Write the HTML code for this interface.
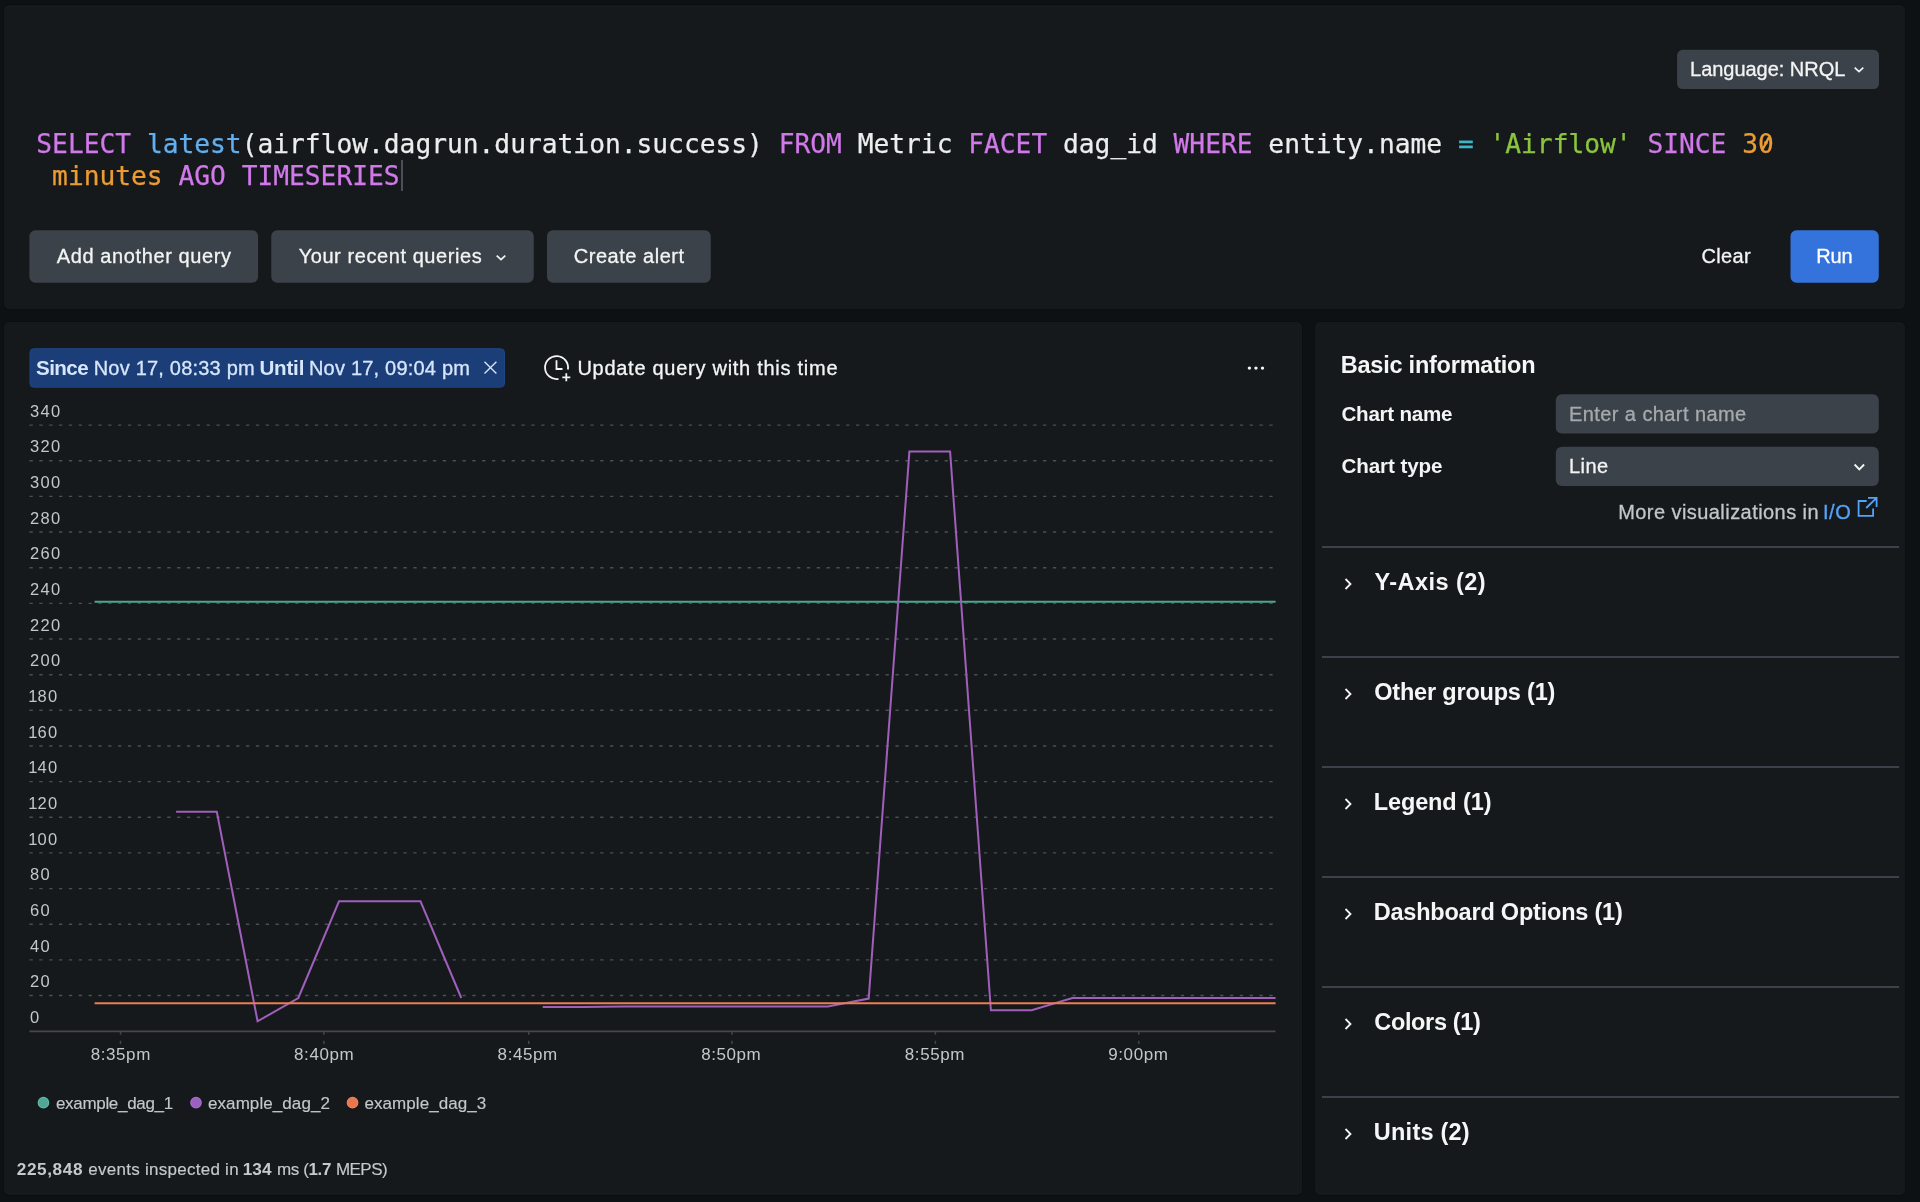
<!DOCTYPE html>
<html lang="en">
<head>
<meta charset="utf-8">
<title>Query builder</title>
<style>
*{box-sizing:border-box;margin:0;padding:0}
html,body{width:1920px;height:1202px;overflow:hidden;background:#0e1113}
body{position:relative;font-family:"Liberation Sans",sans-serif;color:#f3f4f4}
#root{position:absolute;left:0;top:0;width:1920px;height:1202px;will-change:transform}
.abs{position:absolute;white-space:nowrap}
.panel{position:absolute;background:#15191c;border-radius:5px;box-shadow:0 0 0 1px #0c0f11}
.btn{position:absolute;background:#3c4249;border-radius:6px}
.t{position:absolute;white-space:nowrap;line-height:1;-webkit-text-stroke:0.3px}
.t b{-webkit-text-stroke:0}
.code{position:absolute;white-space:pre;font-family:"DejaVu Sans Mono","Liberation Mono",monospace;font-size:26.245px;line-height:31.9px;color:#eceded;-webkit-text-stroke:0.25px}
.kw{color:#d178ea}.fn{color:#61afef}.op{color:#3fb6c4}.str{color:#8bc53f}.num{color:#eb9c33}
.div{position:absolute;left:1321.5px;width:577.5px;height:2px;background:#3f404b}
.dot{position:absolute;width:11.8px;height:11.8px;border-radius:50%;border:1.3px solid}
</style>
</head>
<body>
<div id="root">

<!-- panels and filled shapes -->
<div class="panel" style="left:4px;top:5px;width:1901.2px;height:303.8px"></div>
<div class="panel" style="left:4px;top:321.8px;width:1297.7px;height:873.1px"></div>
<div class="panel" style="left:1315px;top:321.8px;width:590.2px;height:873.1px"></div>
<svg class="abs" style="left:0;top:0" width="1920" height="500" viewBox="0 0 1920 500">
<g fill="#3c4249">
<rect x="1677.1" y="49.8" width="201.9" height="39.2" rx="5.5"/>
<rect x="29.4" y="230.2" width="228.7" height="52.5" rx="6"/>
<rect x="271.25" y="230.2" width="262.5" height="52.5" rx="6"/>
<rect x="547" y="230.2" width="163.75" height="52.5" rx="6"/>
<rect x="1555.8" y="394.3" width="323" height="39.2" rx="6"/>
<rect x="1555.8" y="446.8" width="323" height="39.2" rx="6"/>
</g>
<rect x="1790.5" y="230.2" width="88.25" height="52.5" rx="6" fill="#3573dc"/>
<rect x="30" y="348.7" width="474.5" height="38.5" rx="4" fill="#1c3e78" stroke="#1e4686" stroke-width="1"/>
</svg>

<!-- top query panel -->
<svg class="abs" style="left:1852px;top:63px" width="14" height="14" viewBox="0 0 14 14"><path d="M2.7 4.6 L7 8.7 L11.3 4.6" fill="none" stroke="#f3f4f4" stroke-width="1.7"/></svg>
<div class="code" id="code" style="left:36.3px;top:128.7px"><span class="kw">SELECT</span> <span class="fn">latest</span>(airflow.dagrun.duration.success) <span class="kw">FROM</span> Metric <span class="kw">FACET</span> dag_id <span class="kw">WHERE</span> entity.name <span class="op">=</span> <span class="str">'Airflow'</span> <span class="kw">SINCE</span> <span class="num">30</span>
 <span class="num">minutes</span> <span class="kw">AGO</span> <span class="kw">TIMESERIES</span></div>
<svg class="abs" style="left:1756px;top:130px" width="20" height="28" viewBox="0 0 20 28"><line x1="6.7" y1="19.2" x2="12.9" y2="7.4" stroke="#eb9c33" stroke-width="2.3"/></svg>
<div class="abs" style="left:401px;top:160px;width:2px;height:31px;background:#4a5058"></div>
<svg class="abs" style="left:494.3px;top:250.5px" width="14" height="14" viewBox="0 0 14 14"><path d="M2.7 4.6 L7 8.7 L11.3 4.6" fill="none" stroke="#f3f4f4" stroke-width="1.7"/></svg>

<!-- chart panel -->
<svg class="abs" style="left:483px;top:360.4px" width="15" height="15" viewBox="0 0 15 15"><path d="M1.5 1.7 L13.4 13.5 M13.4 1.7 L1.5 13.5" fill="none" stroke="#d6e6fb" stroke-width="1.35"/></svg>
<svg class="abs" style="left:540px;top:351px" width="34" height="34" viewBox="0 0 34 34"><g fill="none" stroke="#f3f4f4" stroke-width="1.8"><path d="M27.9 18.5 A11.5 11.5 0 1 0 18.5 27.9"/><path d="M16.5 9.2 V18 H22.5"/><path d="M26.3 22.3 V30.3 M22.3 26.3 H30.3"/></g></svg>
<svg class="abs" style="left:1240px;top:360px" width="32" height="16" viewBox="0 0 32 16"><g fill="#f3f4f4"><circle cx="9.4" cy="8.1" r="1.7"/><circle cx="15.95" cy="8.1" r="1.7"/><circle cx="22.5" cy="8.1" r="1.7"/></g></svg>
<svg class="abs" style="left:0;top:0" width="1302" height="1202" viewBox="0 0 1302 1202">
<g stroke="#4a4f57" stroke-width="1.4" stroke-dasharray="3.3 6.54">
<line x1="29.5" x2="1273.3" y1="995.5" y2="995.5"/>
<line x1="29.5" x2="1273.3" y1="959.9" y2="959.9"/>
<line x1="29.5" x2="1273.3" y1="924.2" y2="924.2"/>
<line x1="29.5" x2="1273.3" y1="888.6" y2="888.6"/>
<line x1="29.5" x2="1273.3" y1="852.9" y2="852.9"/>
<line x1="29.5" x2="1273.3" y1="817.3" y2="817.3"/>
<line x1="29.5" x2="1273.3" y1="781.6" y2="781.6"/>
<line x1="29.5" x2="1273.3" y1="746.0" y2="746.0"/>
<line x1="29.5" x2="1273.3" y1="710.3" y2="710.3"/>
<line x1="29.5" x2="1273.3" y1="674.7" y2="674.7"/>
<line x1="29.5" x2="1273.3" y1="639.0" y2="639.0"/>
<line x1="29.5" x2="1273.3" y1="603.4" y2="603.4"/>
<line x1="29.5" x2="1273.3" y1="567.7" y2="567.7"/>
<line x1="29.5" x2="1273.3" y1="532.0" y2="532.0"/>
<line x1="29.5" x2="1273.3" y1="496.4" y2="496.4"/>
<line x1="29.5" x2="1273.3" y1="460.7" y2="460.7"/>
<line x1="29.5" x2="1273.3" y1="425.1" y2="425.1"/>
</g>
<line x1="29.5" x2="1275.5" y1="1031.4" y2="1031.4" stroke="#48464f" stroke-width="1.6"/>
<g stroke="#45434f" stroke-width="1.5" stroke-dasharray="3.4 5.9">
<line x1="120.50" x2="120.50" y1="1031.4" y2="1044.4"/>
<line x1="323.85" x2="323.85" y1="1031.4" y2="1044.4"/>
<line x1="528.75" x2="528.75" y1="1031.4" y2="1044.4"/>
<line x1="731.90" x2="731.90" y1="1031.4" y2="1044.4"/>
<line x1="935.40" x2="935.40" y1="1031.4" y2="1044.4"/>
<line x1="1138.75" x2="1138.75" y1="1031.4" y2="1044.4"/>
</g>
<g fill="none" stroke-width="2" stroke-linejoin="miter">
<polyline points="94.6,601.7 1275.6,601.7" stroke="#4ca694"/>
<polyline points="176.1,811.8 216.8,811.8 257.6,1021.3 298.3,998.0 339.0,901.3 420.5,901.3 461.3,998.0" stroke="#a05fbb"/>
<polyline points="542.7,1007.0 583.5,1007.0 624.2,1006.5 827.9,1006.5 868.7,998.6 909.4,451.6 950.1,451.6 990.9,1010.3 1031.6,1010.3 1072.4,998.0 1275.6,998.0" stroke="#a05fbb"/>
<polyline points="94.6,1003.3 1275.6,1003.3" stroke="#ec7e52"/>
</g>
</svg>

<svg class="abs" style="left:30px;top:1090px" width="340" height="26" viewBox="0 0 340 26"><g stroke-width="1.2"><circle cx="13.45" cy="12.65" r="5.25" fill="#52a794" stroke="#5bb9a5"/><circle cx="166" cy="12.6" r="5.25" fill="#9b61be" stroke="#aa69d0"/><circle cx="322.55" cy="12.65" r="5.25" fill="#e8764e" stroke="#fa8055"/></g></svg>

<!-- config panel -->
<svg class="abs" style="left:1852px;top:459.5px" width="14" height="14" viewBox="0 0 14 14"><path d="M2.6 4.5 L7.35 9.3 L12.1 4.5" fill="none" stroke="#f3f4f4" stroke-width="1.9"/></svg>
<svg class="abs" style="left:1856px;top:495px" width="24" height="24" viewBox="0 0 24 24"><g fill="none" stroke="#55a3f8" stroke-width="1.8"><path d="M10.7 6 H2.6 V20.85 H17.1 V13.4"/><path d="M12 2.9 H20.6 V12 M20.6 2.9 L10.2 13"/></g></svg>
<div class="div" style="top:546.0px"></div>
<svg class="abs" style="left:1341px;top:576.0px" width="14" height="16" viewBox="0 0 14 16"><path d="M4.5 3 L9.5 8 L4.5 13" fill="none" stroke="#f3f4f4" stroke-width="1.8"/></svg>
<div class="div" style="top:655.9px"></div>
<svg class="abs" style="left:1341px;top:685.9px" width="14" height="16" viewBox="0 0 14 16"><path d="M4.5 3 L9.5 8 L4.5 13" fill="none" stroke="#f3f4f4" stroke-width="1.8"/></svg>
<div class="div" style="top:765.9px"></div>
<svg class="abs" style="left:1341px;top:795.9px" width="14" height="16" viewBox="0 0 14 16"><path d="M4.5 3 L9.5 8 L4.5 13" fill="none" stroke="#f3f4f4" stroke-width="1.8"/></svg>
<div class="div" style="top:875.8px"></div>
<svg class="abs" style="left:1341px;top:905.8px" width="14" height="16" viewBox="0 0 14 16"><path d="M4.5 3 L9.5 8 L4.5 13" fill="none" stroke="#f3f4f4" stroke-width="1.8"/></svg>
<div class="div" style="top:985.7px"></div>
<svg class="abs" style="left:1341px;top:1015.7px" width="14" height="16" viewBox="0 0 14 16"><path d="M4.5 3 L9.5 8 L4.5 13" fill="none" stroke="#f3f4f4" stroke-width="1.8"/></svg>
<div class="div" style="top:1095.7px"></div>
<svg class="abs" style="left:1341px;top:1125.7px" width="14" height="16" viewBox="0 0 14 16"><path d="M4.5 3 L9.5 8 L4.5 13" fill="none" stroke="#f3f4f4" stroke-width="1.8"/></svg>

<!-- text -->
<div class="t" id="t-lang" style="left:1690.08px;top:59px;font-size:20px;color:#f3f4f4;letter-spacing:-0.036px">Language: NRQL</div>
<div class="t" id="t-add" style="left:56.79px;top:246px;font-size:20px;color:#f3f4f4;letter-spacing:0.605px">Add another query</div>
<div class="t" id="t-recent" style="left:298.65px;top:246px;font-size:20px;color:#f3f4f4;letter-spacing:0.576px">Your recent queries</div>
<div class="t" id="t-alert" style="left:573.77px;top:246px;font-size:20px;color:#f3f4f4;letter-spacing:0.527px">Create alert</div>
<div class="t" id="t-clear" style="left:1701.42px;top:246px;font-size:20px;color:#f3f4f4;letter-spacing:0.347px">Clear</div>
<div class="t" id="t-run" style="left:1816.24px;top:246px;font-size:20px;color:#ffffff;letter-spacing:-0.174px">Run</div>
<div class="t" id="c-since" style="left:36.05px;top:358px;font-size:20.6px;color:#d6e6fb;letter-spacing:-0.595px;font-weight:bold;-webkit-text-stroke:0">Since</div>
<div class="t" id="c-d1" style="left:93.70px;top:358px;font-size:20px;color:#d6e6fb;letter-spacing:0.210px">Nov 17, 08:33 pm</div>
<div class="t" id="c-until" style="left:259.39px;top:358px;font-size:20.6px;color:#d6e6fb;letter-spacing:-0.189px;font-weight:bold;-webkit-text-stroke:0">Until</div>
<div class="t" id="c-d2" style="left:308.93px;top:358px;font-size:20px;color:#d6e6fb;letter-spacing:0.210px">Nov 17, 09:04 pm</div>
<div class="t" id="t-update" style="left:577.39px;top:358px;font-size:20px;color:#f3f4f4;letter-spacing:0.728px">Update query with this time</div>
<div class="t" id="lg1" style="left:55.97px;top:1095px;font-size:17px;color:#c4c7c9;letter-spacing:-0.318px;-webkit-text-stroke:0.15px">example_dag_1</div>
<div class="t" id="lg2" style="left:208.00px;top:1095px;font-size:17px;color:#c4c7c9;letter-spacing:0.076px;-webkit-text-stroke:0.15px">example_dag_2</div>
<div class="t" id="lg3" style="left:364.53px;top:1095px;font-size:17px;color:#c4c7c9;letter-spacing:0.057px;-webkit-text-stroke:0.15px">example_dag_3</div>
<div class="t" id="f1" style="left:16.72px;top:1161px;font-size:17.2px;color:#c6c9cb;letter-spacing:0.613px;font-weight:bold;-webkit-text-stroke:0">225,848</div>
<div class="t" id="f2" style="left:88.30px;top:1161px;font-size:17px;color:#c6c9cb;letter-spacing:0.266px;-webkit-text-stroke:0.15px">events inspected in</div>
<div class="t" id="f3" style="left:242.67px;top:1161px;font-size:17.2px;color:#c6c9cb;letter-spacing:0.093px;font-weight:bold;-webkit-text-stroke:0">134</div>
<div class="t" id="f4" style="left:276.94px;top:1161px;font-size:17px;color:#c6c9cb;letter-spacing:-0.364px;-webkit-text-stroke:0.15px">ms (<b>1.7</b></div>
<div class="t" id="f6" style="left:335.88px;top:1161px;font-size:17px;color:#c6c9cb;letter-spacing:-0.528px;-webkit-text-stroke:0.15px">MEPS)</div>
<div class="t" id="h-basic" style="left:1340.72px;top:354px;font-size:23.5px;color:#f5f6f6;letter-spacing:-0.227px;font-weight:bold;-webkit-text-stroke:0">Basic information</div>
<div class="t" id="t-cname" style="left:1341.42px;top:404px;font-size:20.6px;color:#f3f4f4;letter-spacing:-0.239px;font-weight:bold;-webkit-text-stroke:0">Chart name</div>
<div class="t" id="t-enter" style="left:1569.01px;top:404px;font-size:20px;color:#a7aaad;letter-spacing:0.417px">Enter a chart name</div>
<div class="t" id="t-ctype" style="left:1341.42px;top:456px;font-size:20.6px;color:#f3f4f4;letter-spacing:-0.080px;font-weight:bold;-webkit-text-stroke:0">Chart type</div>
<div class="t" id="t-line" style="left:1568.97px;top:456px;font-size:20px;color:#f3f4f4;letter-spacing:0.469px">Line</div>
<div class="t" id="t-more" style="left:1618.15px;top:502px;font-size:20px;color:#c3c6c8;letter-spacing:0.441px">More visualizations in</div>
<div class="t" id="t-io" style="left:1822.96px;top:502px;font-size:20px;color:#55a3f8;letter-spacing:0.543px">I/O</div>
<div class="t" id="h-s0" style="left:1374.47px;top:571px;font-size:23.5px;color:#f5f6f6;letter-spacing:0.452px;font-weight:bold;-webkit-text-stroke:0">Y-Axis (2)</div>
<div class="t" id="h-s1" style="left:1374.26px;top:681px;font-size:23.5px;color:#f5f6f6;letter-spacing:-0.195px;font-weight:bold;-webkit-text-stroke:0">Other groups (1)</div>
<div class="t" id="h-s2" style="left:1373.70px;top:791px;font-size:23.5px;color:#f5f6f6;letter-spacing:-0.110px;font-weight:bold;-webkit-text-stroke:0">Legend (1)</div>
<div class="t" id="h-s3" style="left:1373.70px;top:901px;font-size:23.5px;color:#f5f6f6;letter-spacing:-0.210px;font-weight:bold;-webkit-text-stroke:0">Dashboard Options (1)</div>
<div class="t" id="h-s4" style="left:1374.26px;top:1011px;font-size:23.5px;color:#f5f6f6;letter-spacing:-0.342px;font-weight:bold;-webkit-text-stroke:0">Colors (1)</div>
<div class="t" id="h-s5" style="left:1373.84px;top:1121px;font-size:23.5px;color:#f5f6f6;letter-spacing:0.234px;font-weight:bold;-webkit-text-stroke:0">Units (2)</div>
<div class="t" id="x0" style="left:90.70px;top:1046px;font-size:17px;color:#c4c7c9;letter-spacing:0.580px;-webkit-text-stroke:0">8:35pm</div>
<div class="t" id="x1" style="left:294.04px;top:1046px;font-size:17px;color:#c4c7c9;letter-spacing:0.600px;-webkit-text-stroke:0">8:40pm</div>
<div class="t" id="x2" style="left:497.62px;top:1046px;font-size:17px;color:#c4c7c9;letter-spacing:0.576px;-webkit-text-stroke:0">8:45pm</div>
<div class="t" id="x3" style="left:701.16px;top:1046px;font-size:17px;color:#c4c7c9;letter-spacing:0.578px;-webkit-text-stroke:0">8:50pm</div>
<div class="t" id="x4" style="left:904.76px;top:1046px;font-size:17px;color:#c4c7c9;letter-spacing:0.610px;-webkit-text-stroke:0">8:55pm</div>
<div class="t" id="x5" style="left:1108.22px;top:1046px;font-size:17px;color:#c4c7c9;letter-spacing:0.592px;-webkit-text-stroke:0">9:00pm</div>
<div class="t" id="y0" style="left:30.00px;top:1009px;font-size:16.5px;color:#c4c7c9;letter-spacing:1.300px;-webkit-text-stroke:0">0</div>
<div class="t" id="y20" style="left:30.00px;top:973px;font-size:16.5px;color:#c4c7c9;letter-spacing:1.300px;-webkit-text-stroke:0">20</div>
<div class="t" id="y40" style="left:30.00px;top:938px;font-size:16.5px;color:#c4c7c9;letter-spacing:1.300px;-webkit-text-stroke:0">40</div>
<div class="t" id="y60" style="left:30.00px;top:902px;font-size:16.5px;color:#c4c7c9;letter-spacing:1.300px;-webkit-text-stroke:0">60</div>
<div class="t" id="y80" style="left:30.00px;top:866px;font-size:16.5px;color:#c4c7c9;letter-spacing:1.300px;-webkit-text-stroke:0">80</div>
<div class="t" id="y100" style="left:28.20px;top:831px;font-size:16.5px;color:#c4c7c9;letter-spacing:1.300px;-webkit-text-stroke:0"><span style="letter-spacing:0.1px">1</span>00</div>
<div class="t" id="y120" style="left:28.20px;top:795px;font-size:16.5px;color:#c4c7c9;letter-spacing:1.300px;-webkit-text-stroke:0"><span style="letter-spacing:0.1px">1</span>20</div>
<div class="t" id="y140" style="left:28.20px;top:759px;font-size:16.5px;color:#c4c7c9;letter-spacing:1.300px;-webkit-text-stroke:0"><span style="letter-spacing:0.1px">1</span>40</div>
<div class="t" id="y160" style="left:28.20px;top:724px;font-size:16.5px;color:#c4c7c9;letter-spacing:1.300px;-webkit-text-stroke:0"><span style="letter-spacing:0.1px">1</span>60</div>
<div class="t" id="y180" style="left:28.20px;top:688px;font-size:16.5px;color:#c4c7c9;letter-spacing:1.300px;-webkit-text-stroke:0"><span style="letter-spacing:0.1px">1</span>80</div>
<div class="t" id="y200" style="left:30.00px;top:652px;font-size:16.5px;color:#c4c7c9;letter-spacing:1.300px;-webkit-text-stroke:0">200</div>
<div class="t" id="y220" style="left:30.00px;top:617px;font-size:16.5px;color:#c4c7c9;letter-spacing:1.300px;-webkit-text-stroke:0">220</div>
<div class="t" id="y240" style="left:30.00px;top:581px;font-size:16.5px;color:#c4c7c9;letter-spacing:1.300px;-webkit-text-stroke:0">240</div>
<div class="t" id="y260" style="left:30.00px;top:545px;font-size:16.5px;color:#c4c7c9;letter-spacing:1.300px;-webkit-text-stroke:0">260</div>
<div class="t" id="y280" style="left:30.00px;top:510px;font-size:16.5px;color:#c4c7c9;letter-spacing:1.300px;-webkit-text-stroke:0">280</div>
<div class="t" id="y300" style="left:30.00px;top:474px;font-size:16.5px;color:#c4c7c9;letter-spacing:1.300px;-webkit-text-stroke:0">300</div>
<div class="t" id="y320" style="left:30.00px;top:438px;font-size:16.5px;color:#c4c7c9;letter-spacing:1.300px;-webkit-text-stroke:0">320</div>
<div class="t" id="y340" style="left:30.00px;top:403px;font-size:16.5px;color:#c4c7c9;letter-spacing:1.300px;-webkit-text-stroke:0">340</div>
</div>
</body>
</html>
